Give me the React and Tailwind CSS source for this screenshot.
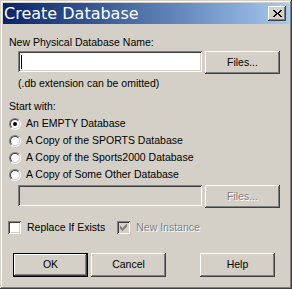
const raised =
  "shadow-[inset_-1px_-1px_#404040,inset_1px_1px_#ffffff,inset_-2px_-2px_#808080,inset_2px_2px_#d4d0c8]";
const sunken =
  "shadow-[inset_1px_1px_#808080,inset_-1px_-1px_#ffffff,inset_2px_2px_#404040,inset_-2px_-2px_#d4d0c8]";
const grayText = "text-[#808080] [text-shadow:1px_1px_0_#ffffff]";

// pixel rows as [x, width] runs
const closeRows = [
  [[0, 2], [7, 2]],
  [[1, 2], [6, 2]],
  [[2, 2], [5, 2]],
  [[3, 3]],
  [[2, 2], [5, 2]],
  [[1, 2], [6, 2]],
  [[0, 2], [7, 2]],
];

const checkRows = [
  [[6, 1]],
  [[5, 2]],
  [[0, 1], [4, 3]],
  [[0, 2], [3, 3]],
  [[0, 5]],
  [[1, 3]],
  [[2, 1]],
];

function PixelGlyph({ rows, w, h, color }) {
  return (
    <svg width={w} height={h} viewBox={`0 0 ${w} ${h}`} shapeRendering="crispEdges">
      {rows.map((segs, y) =>
        segs.map(([x, sw], i) => (
          <rect key={`${y}-${i}`} x={x} y={y} width={sw} height="1" fill={color} />
        ))
      )}
    </svg>
  );
}

function Radio({ checked, label }) {
  return (
    <div className="h-[17px] flex items-center gap-[5px]">
      <div className="w-[12px] h-[12px] rounded-full border border-t-[#808080] border-l-[#808080] border-b-white border-r-white">
        <div className="w-full h-full rounded-full bg-white border border-t-[#404040] border-l-[#404040] border-b-[#d4d0c8] border-r-[#d4d0c8] flex items-center justify-center">
          {checked && <div className="w-[4px] h-[4px] rounded-full bg-black" />}
        </div>
      </div>
      <span className="leading-[13px]">{label}</span>
    </div>
  );
}

function Checkbox({ checked, disabled, label }) {
  return (
    <div className="flex items-center gap-[6px]">
      <div className={`w-[13px] h-[13px] flex items-center justify-center ${sunken} ${disabled ? "bg-[#d4d0c8]" : "bg-white"}`}>
        {checked && <PixelGlyph rows={checkRows} w={7} h={7} color={disabled ? "#808080" : "#000"} />}
      </div>
      <span className={`leading-[13px] ${disabled ? grayText : ""}`}>{label}</span>
    </div>
  );
}

function Button({ children, className = "", isDefault, disabled }) {
  return (
    <div
      className={`w-[75px] flex items-center justify-center bg-[#d4d0c8] ${raised} ${isDefault ? "border border-black" : ""} ${disabled ? grayText : ""} ${className}`}
    >
      {children}
    </div>
  );
}

export default function App() {
  return (
    <div className="w-[292px] h-[289px] p-[3px] flex flex-col bg-[#d4d0c8] text-black text-[10.5px] font-['Liberation_Sans',Arial,sans-serif] shadow-[inset_-1px_-1px_#404040,inset_1px_1px_#d4d0c8,inset_-2px_-2px_#808080,inset_2px_2px_#ffffff]">
      <div className="h-[21px] flex items-center justify-between pl-[1px] pr-[3px] bg-linear-to-r from-[#0a246a] to-[#a6caf0]">
        <span className="text-white text-[16px] font-['DejaVu_Sans',sans-serif] leading-[19px]">Create Database</span>
        <div className={`w-[18px] h-[15px] flex items-center justify-center bg-[#d4d0c8] ${raised}`}>
          <PixelGlyph rows={closeRows} w={9} h={7} color="#000" />
        </div>
      </div>

      <div className="flex flex-col pl-[6px]">
        <div className="mt-[12px] leading-[13px]">New Physical Database Name:</div>
        <div className="mt-[2px] ml-[9px] flex gap-[3px] items-start">
          <div className={`w-[184px] h-[21px] bg-white ${sunken} flex items-center pl-[3px]`}>
            <div className="w-[1px] h-[14px] bg-black" />
          </div>
          <Button className="h-[23px]">Files...</Button>
        </div>
        <div className="mt-[3px] ml-[9px] leading-[13px]">(.db extension can be omitted)</div>

        <div className="mt-[10px] leading-[13px]">Start with:</div>
        <div className="mt-[2px] flex flex-col">
          <Radio checked label="An EMPTY Database" />
          <Radio label="A Copy of the SPORTS Database" />
          <Radio label="A Copy of the Sports2000 Database" />
          <Radio label="A Copy of Some Other Database" />
        </div>
        <div className="mt-[2px] ml-[9px] flex gap-[3px] items-start">
          <div className={`w-[184px] h-[21px] bg-[#d4d0c8] ${sunken}`} />
          <Button className="h-[23px]" disabled>Files...</Button>
        </div>

        <div className="mt-[13px] -ml-px flex items-center gap-[12px]">
          <Checkbox label="Replace If Exists" />
          <Checkbox checked disabled label="New Instance" />
        </div>

        <div className="mt-[19px] ml-[4px] flex">
          <Button isDefault className="h-[24px]">OK</Button>
          <Button className="h-[24px] ml-[3px]">Cancel</Button>
          <Button className="h-[24px] ml-[34px]">Help</Button>
        </div>
      </div>
    </div>
  );
}
